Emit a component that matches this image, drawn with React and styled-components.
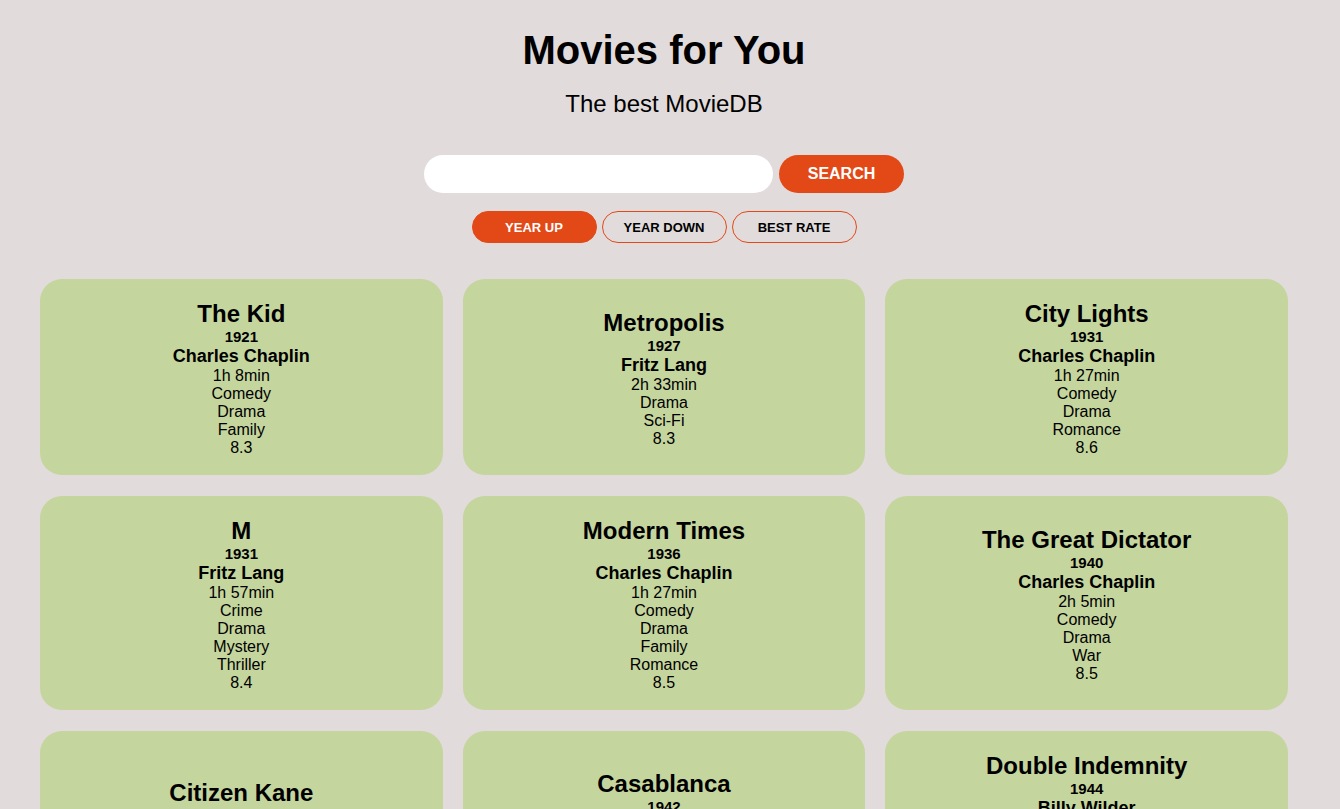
import React, { useState } from 'react';
import styled, { createGlobalStyle } from 'styled-components';

const movies = [
    { title: 'The Kid', year: 1921, director: 'Charles Chaplin', duration: '1h 8min', genres: ['Comedy', 'Drama', 'Family'], rate: '8.3' },
    { title: 'Metropolis', year: 1927, director: 'Fritz Lang', duration: '2h 33min', genres: ['Drama', 'Sci-Fi'], rate: '8.3' },
    { title: 'City Lights', year: 1931, director: 'Charles Chaplin', duration: '1h 27min', genres: ['Comedy', 'Drama', 'Romance'], rate: '8.6' },
    { title: 'M', year: 1931, director: 'Fritz Lang', duration: '1h 57min', genres: ['Crime', 'Drama', 'Mystery', 'Thriller'], rate: '8.4' },
    { title: 'Modern Times', year: 1936, director: 'Charles Chaplin', duration: '1h 27min', genres: ['Comedy', 'Drama', 'Family', 'Romance'], rate: '8.5' },
    { title: 'The Great Dictator', year: 1940, director: 'Charles Chaplin', duration: '2h 5min', genres: ['Comedy', 'Drama', 'War'], rate: '8.5' },
    { title: 'Citizen Kane', year: 1941, director: 'Orson Welles', duration: '1h 59min', genres: ['Drama', 'Mystery'], rate: '8.3' },
    { title: 'Casablanca', year: 1942, director: 'Michael Curtiz', duration: '1h 42min', genres: ['Drama', 'Romance', 'War'], rate: '8.5' },
    { title: 'Double Indemnity', year: 1944, director: 'Billy Wilder', duration: '1h 47min', genres: ['Crime', 'Drama', 'Film-Noir', 'Mystery', 'Thriller'], rate: '8.3' },
];

const sorts = ['YEAR UP', 'YEAR DOWN', 'BEST RATE'];

const App = () => {
    const [sort, setSort] = useState('YEAR UP');
    const [query, setQuery] = useState('');

    return (
        <Page>
            <GlobalStyle />
            <Title>Movies for You</Title>
            <Subtitle>The best MovieDB</Subtitle>
            <SearchRow>
                <SearchInput value={query} onChange={e => setQuery(e.target.value)} />
                <SearchButton>SEARCH</SearchButton>
            </SearchRow>
            <SortRow>
                {sorts.map(s => (
                    <SortButton key={s} $active={s === sort} onClick={() => setSort(s)}>{s}</SortButton>
                ))}
            </SortRow>
            <Grid>
                {movies.map(m => (
                    <Card key={m.title}>
                        <MovieTitle>{m.title}</MovieTitle>
                        <Year>{m.year}</Year>
                        <Director>{m.director}</Director>
                        <Line>{m.duration}</Line>
                        {m.genres.map(g => <Line key={g}>{g}</Line>)}
                        <Line>{m.rate}</Line>
                    </Card>
                ))}
            </Grid>
        </Page>
    );
};

export default App;

const GlobalStyle = createGlobalStyle`
    body{
        margin: 0;
        background-color: #e1dbdb;
        font-family: "Liberation Sans", Arial, Helvetica, sans-serif;
        color: #000;
    }
`

// right side keeps 12px more room, like the original page with its scrollbar
const Page = styled.div`
    padding: 28px 52px 40px 40px;
    display: flex;
    flex-direction: column;
    align-items: center;
`

const Title = styled.h1`
    margin: 0;
    font-size: 40px;
    font-weight: 700;
`

const Subtitle = styled.p`
    margin: 17px 0 0;
    font-size: 24px;
`

const SearchRow = styled.div`
    display: flex;
    gap: 6px;
    margin-top: 37px;
`

const SearchInput = styled.input`
    width: 349px;
    height: 38px;
    box-sizing: border-box;
    border: none;
    border-radius: 19px;
    background: white;
    padding: 0 16px;
    font-size: 16px;
    outline: none;
`

const SearchButton = styled.button`
    width: 125px;
    height: 38px;
    border: none;
    border-radius: 19px;
    background-color: #e34917;
    color: white;
    font-family: inherit;
    font-size: 16px;
    font-weight: 700;
    cursor: pointer;
`

const SortRow = styled.div`
    display: flex;
    gap: 5px;
    margin-top: 18px;
`

const SortButton = styled.button`
    width: 125px;
    height: 32px;
    box-sizing: border-box;
    border-radius: 16px;
    border: 1px solid #e34917;
    background-color: ${p => p.$active ? '#e34917' : 'transparent'};
    color: ${p => p.$active ? 'white' : 'black'};
    font-family: inherit;
    font-size: 13px;
    font-weight: 700;
    cursor: pointer;
`

const Grid = styled.div`
    align-self: stretch;
    display: grid;
    grid-template-columns: repeat(3, 1fr);
    column-gap: 20px;
    row-gap: 21px;
    margin-top: 36px;
`

const Card = styled.div`
    background-color: #c5d59e;
    border-radius: 22px;
    padding: 21px 16px 18.4px;
    display: flex;
    flex-direction: column;
    align-items: center;
    justify-content: center;
    text-align: center;
`

const MovieTitle = styled.div`
    font-size: 24px;
    font-weight: 700;
    line-height: 27.6px;
`

const Year = styled.div`
    font-size: 15px;
    font-weight: 700;
    line-height: 18px;
`

const Director = styled.div`
    font-size: 18px;
    font-weight: 700;
    line-height: 21px;
`

const Line = styled.div`
    font-size: 16px;
    line-height: 18px;
`
